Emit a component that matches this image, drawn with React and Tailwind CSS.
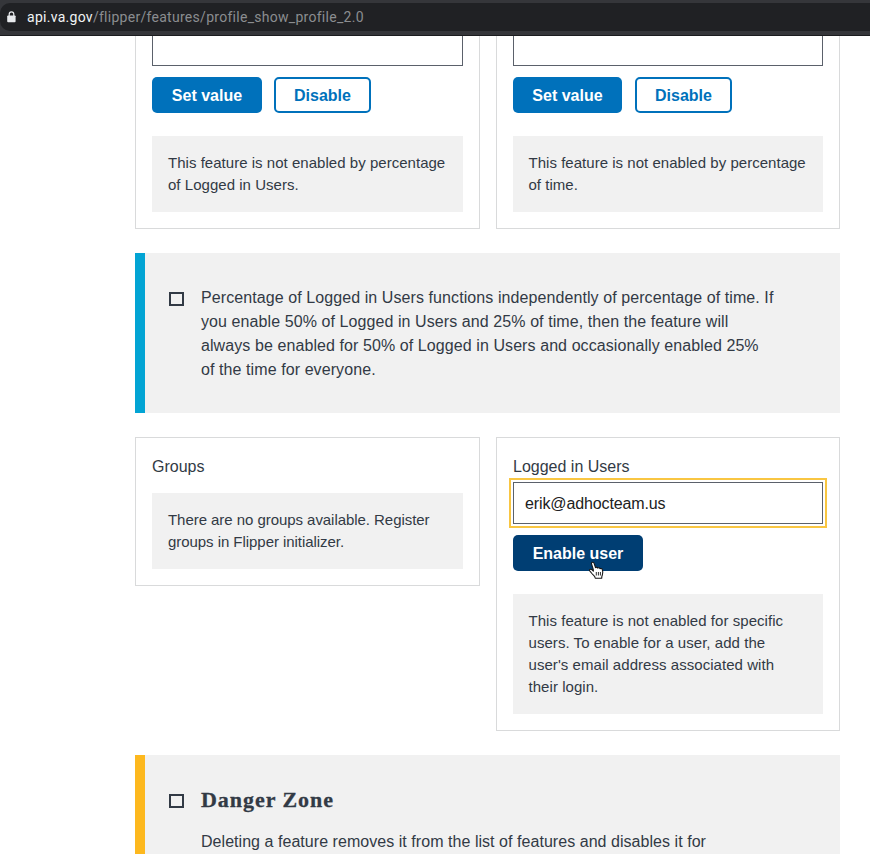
import React from "react";

const lines = (items) =>
  items.map((t) => (
    <span key={t} className="block whitespace-nowrap">
      {t}
    </span>
  ));

function BrowserBar() {
  return (
    <header className="flex h-9 shrink-0 flex-col border-b border-[#1b1c1f] bg-[#35363a] pt-[3px]">
      <div className="flex h-7 items-center rounded-l-[10px] bg-[#202124] pl-[7px] font-[Roboto,sans-serif] text-[14px]">
        <svg width="9" height="12" viewBox="0 0 9 12" className="mr-[11px]">
          <path d="M2.2 5V3.2a2.3 2.3 0 0 1 4.6 0V5" fill="none" stroke="#e8eaed" strokeWidth="1.2" />
          <rect x="0.2" y="4.4" width="8.4" height="6.8" rx="0.9" fill="#e8eaed" />
        </svg>
        <span className="whitespace-nowrap tracking-[0.28px] text-[#8b8d90]">
          <span className="text-[#f1f3f4]">api.va.gov</span>/flipper/features/profile_show_profile_2.0
        </span>
      </div>
    </header>
  );
}

function Note({ text, className = "" }) {
  return (
    <div className={`bg-[#f1f1f1] py-4 text-[15px] leading-[22px] ${className}`}>
      <p>{lines(text)}</p>
    </div>
  );
}

function PercentageCard({ text, setWidth, gap, notePad }) {
  return (
    <section className="h-[193px] border border-t-0 border-[#d9dadb] px-4">
      <div className="h-[30px] border border-t-0 border-[#5b616b]" />
      <div className={`mt-[11px] flex h-9 text-[16px] font-bold ${gap}`}>
        <button className={`rounded-[5px] bg-[#0071bb] pt-[2px] text-white ${setWidth}`}>Set value</button>
        <button className="w-[97px] rounded-[5px] border-2 border-[#0071bb] bg-white pt-[2px] text-[#0071bb]">
          Disable
        </button>
      </div>
      <Note text={text} className={`mt-[23px] h-[76px] tracking-[0.03px] ${notePad}`} />
    </section>
  );
}

function Box() {
  return <span className="block h-[14px] w-[15px] shrink-0 border-2 border-[#323a45]" />;
}

function HandCursor() {
  return (
    <svg className="absolute top-[26px] left-[75px]" width="17" height="19" viewBox="0 0 17 19">
      <path
        d="M3.600 3.100C3.200 1.900 3.800 1.300 4.500 1.200C5.200 1.100 5.900 1.600 6.200 2.600L7.500 6.700C8 6.100 9.400 6.200 9.700 7.100C10.400 6.500 11.700 6.700 12 7.700C12.700 7.300 14 7.500 14.300 8.600C14.900 10.200 15 12.300 14.400 13.700C13.900 14.800 13.700 15.300 13.700 17.300H7.300C7.100 15.800 6.400 15 5.200 13.900C4 12.800 3 11.200 1.900 10.200C1 9.300 1.700 8.100 2.900 8.300C3.900 8.500 4.500 9.200 5.400 10.100L5.200 8.200Z"
        fill="#fff"
        stroke="#151515"
        strokeWidth="1.1"
        strokeLinejoin="round"
      />
      <path d="M8.300 11v3.500M10.400 11v3.500M12.400 11v3.500" fill="none" stroke="#151515" strokeWidth="0.9" />
    </svg>
  );
}

export default function App() {
  return (
    <div className="flex h-[854px] w-[870px] flex-col overflow-hidden bg-white font-['Liberation_Sans',Arial,sans-serif] text-[#323a45]">
      <BrowserBar />
      <main className="ml-[135px] w-[705px]">
        <div className="grid grid-cols-[345px_344px] gap-4">
          <PercentageCard
            text={["This feature is not enabled by percentage", "of Logged in Users."]}
            setWidth="w-[110px]"
            gap="gap-3"
            notePad="pl-4"
          />
          <PercentageCard
            text={["This feature is not enabled by percentage", "of time."]}
            setWidth="w-[109px]"
            gap="gap-[13px]"
            notePad="pl-[15.5px]"
          />
        </div>

        <section className="mt-6 flex h-40 border-l-10 border-[#02a4d4] bg-[#f1f1f1] pt-[33px] pl-6">
          <div className="pt-[6px]">
            <Box />
          </div>
          <p className="ml-[17px] text-[16px] leading-6 tracking-[0.085px]">
            {lines([
              "Percentage of Logged in Users functions independently of percentage of time. If",
              "you enable 50% of Logged in Users and 25% of time, then the feature will",
              "always be enabled for 50% of Logged in Users and occasionally enabled 25%",
              "of the time for everyone.",
            ])}
          </p>
        </section>

        <div className="mt-6 grid grid-cols-[345px_344px] items-start gap-4">
          <section className="h-[149px] border border-[#d9dadb] px-4 pt-[17px]">
            <h2 className="text-[16px] leading-6">Groups</h2>
            <Note
              text={["There are no groups available. Register", "groups in Flipper initializer."]}
              className="mt-[14px] h-[76px] pl-4 tracking-[-0.05px]"
            />
          </section>
          <section className="h-[294px] border border-[#d9dadb] px-4 pt-[17px]">
            <h2 className="text-[16px] leading-6">Logged in Users</h2>
            <div className="mt-[3px] flex h-[42px] items-center border border-[#5b616b] pt-[2px] pl-[11px] text-[16px] tracking-[-0.12px] text-[#212121] outline-2 outline-offset-2 outline-[#f9c642]">
              erik@adhocteam.us
            </div>
            <div className="relative mt-[11px]">
              <button className="block h-9 w-[130px] rounded-[5px] bg-[#003e73] pt-[2px] text-[16px] font-bold text-white">
                Enable user
              </button>
              <HandCursor />
            </div>
            <Note
              text={[
                "This feature is not enabled for specific",
                "users. To enable for a user, add the",
                "user's email address associated with",
                "their login.",
              ]}
              className="mt-[23px] h-[120px] pl-[15.5px] tracking-[0.05px]"
            />
          </section>
        </div>

        <section className="mt-6 flex h-40 border-l-10 border-[#fdb81e] bg-[#f1f1f1] pt-[33px] pl-6">
          <div className="pt-[6px]">
            <Box />
          </div>
          <div className="ml-[17px]">
            <h2 className="font-['Liberation_Serif',serif] text-[22px] leading-6 font-bold tracking-[0.95px] [-webkit-text-stroke:0.3px_#323a45]">
              Danger Zone
            </h2>
            <p className="mt-[18px] text-[16px] leading-6 tracking-[0.045px] whitespace-nowrap">
              Deleting a feature removes it from the list of features and disables it for
            </p>
          </div>
        </section>
      </main>
    </div>
  );
}
